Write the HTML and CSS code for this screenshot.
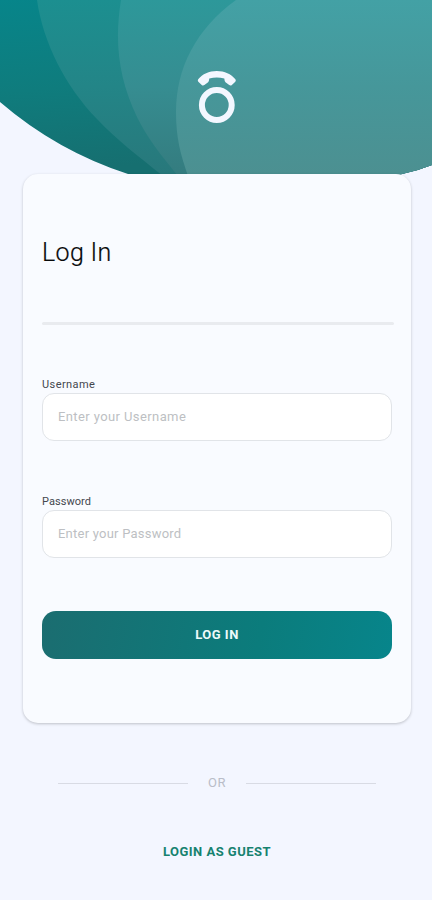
FILE: index.html
```html
<!DOCTYPE html>
<html lang="en">
<head>
<meta charset="utf-8">
<meta name="viewport" content="width=device-width">
<title>Log In</title>
<link rel="stylesheet" href="styles.css">
</head>
<body>
<header class="hero">
  <svg class="waves" viewBox="0 0 432 200" aria-hidden="true">
    <defs>
      <linearGradient id="base" x1="0" y1="0" x2=".15" y2="1"><stop offset="0" stop-color="#07858a"/><stop offset=".45" stop-color="#0f7c7d"/><stop offset=".85" stop-color="#166f70"/></linearGradient>
      <linearGradient id="w1" x1="0" y1="0" x2="0" y2="174" gradientUnits="userSpaceOnUse"><stop offset="0" stop-color="#1c8f90"/><stop offset=".5" stop-color="#238587"/><stop offset="1" stop-color="#28787b"/></linearGradient>
      <linearGradient id="w2" x1="0" y1="0" x2="0" y2="174" gradientUnits="userSpaceOnUse"><stop offset="0" stop-color="#2d989a"/><stop offset=".5" stop-color="#368d91"/><stop offset="1" stop-color="#347c7f"/></linearGradient>
      <linearGradient id="w3" x1="0" y1="0" x2="0" y2="174" gradientUnits="userSpaceOnUse"><stop offset="0" stop-color="#43a1a5"/><stop offset=".5" stop-color="#46979a"/><stop offset="1" stop-color="#4c9091"/></linearGradient>
      <clipPath id="edge"><path d="M0 0H432V165Q417 171 402 174Q265 215 128 174Q57 151 0 102Z"/></clipPath>
    </defs>
    <g clip-path="url(#edge)">
      <path fill="url(#base)" d="M0 0H432V200H0Z"/>
      <path fill="url(#w1)" d="M37 0C43 42 65 86 97 119C117 140 138 156 163 176L200 200H432V0Z"/>
      <path fill="url(#w2)" d="M121 0C114 43 119 79 137 117C148 139 160 154 178 176L200 200H432V0Z"/>
      <path fill="url(#w3)" d="M236 0C196 29 176 68 176 112C176 139 181 156 188 176L200 200H432V0Z"/>
    </g>
  </svg>
  <svg class="logo" viewBox="0 0 40 54" aria-hidden="true">
    <circle cx="19.800" cy="35" r="14.900"/>
    <path d="M1.200 9.300C5.500 4 12 1 19.800 1S34.100 4 38.400 9.300Q39.300 10.500 38.300 11.700L34.600 15.200Q33.500 16 32.200 15.100L28.500 12.200Q27.500 11.300 27.300 8.600Q19.800 6.300 12.300 8.600Q12.100 11.300 11.100 12.200L7.400 15.100Q6.100 16 5 15.200L1.300 11.700Q.3 10.500 1.200 9.300Z"/>
  </svg>
</header>
<main class="card">
  <h1>Log In</h1>
  <hr class="rule">
  <form class="form">
    <div class="field"><label for="username">Username</label><input id="username" type="text" placeholder="Enter your Username"></div>
    <div class="field password"><label for="password">Password</label><input id="password" type="password" placeholder="Enter your Password"></div>
    <button class="submit" type="button">LOG IN</button>
  </form>
</main>
<div class="divider"><span>OR</span></div>
<a class="guest" href="#">LOGIN AS GUEST</a>
</body>
</html>
```
FILE: styles.css
```css
* { box-sizing: border-box; }
body {
  margin: 0;
  height: 900px;
  overflow: hidden;
  display: flex;
  flex-direction: column;
  background: #f3f6ff;
  font-family: Roboto, "Noto Sans", sans-serif;
}
.hero {
  position: relative;
  height: 174px;
  flex: none;
  padding-top: 70px;
}
.waves {
  position: absolute;
  top: 0;
  left: 0;
  width: 432px;
  height: 200px;
}
.logo {
  position: relative;
  display: block;
  width: 40px;
  height: 54px;
  margin-left: 197px;
  fill: #f3f7ff;
}
.logo circle {
  fill: none;
  stroke: #f3f7ff;
  stroke-width: 6;
}
.card {
  position: relative;
  flex: none;
  width: 388px;
  height: 549px;
  margin-left: 23px;
  padding: 63px 19px 0;
  border-radius: 15px;
  background: #f9fbff;
  box-shadow: 0 1px 3px #00000038;
}
h1 {
  margin: 0;
  height: 32px;
  line-height: 32px;
  font-size: 25px;
  font-weight: 300;
  letter-spacing: .35px;
  color: #08090a;
  -webkit-text-stroke: .2px #08090a;
}
.rule {
  width: 352px;
  height: 3px;
  margin: 53px 0 0;
  border: 0;
  border-radius: 2px;
  background: #e9ebef;
}
.form {
  display: flex;
  flex-direction: column;
  padding-top: 53px;
}
.field {
  display: flex;
  flex-direction: column;
  height: 117px;
}
label {
  height: 15px;
  line-height: 14px;
  font-size: 11px;
  letter-spacing: .42px;
  color: #44474e;
}
input {
  width: 350px;
  height: 48px;
  padding: 0 15px 2px;
  border: 1px solid #e1e4e8;
  border-radius: 12px;
  background: #fff;
  font: 13px Roboto, "Noto Sans", sans-serif;
  letter-spacing: .4px;
}
.password label { letter-spacing: .05px; }
.password input { letter-spacing: .23px; }
input::placeholder { color: #bdbfc3; opacity: 1; }
.submit {
  width: 350px;
  height: 48px;
  margin-top: -1px;
  padding: 0 0 2px;
  border: 0;
  border-radius: 14px;
  background: linear-gradient(100deg, #1b6d70, #0b7c7c 62%, #07858b);
  color: #edfafa;
  font: 700 13px Roboto, "Noto Sans", sans-serif;
  letter-spacing: .5px;
}
.divider {
  display: flex;
  align-items: center;
  gap: 20px;
  height: 20px;
  margin: 50px 56px 0 58px;
  color: #b9bdc8;
  font-size: 13px;
  letter-spacing: .5px;
}
.divider span { margin-top: -2px; }
.divider::before,
.divider::after {
  content: "";
  flex: 1;
  height: 1px;
  background: #d8dbe4;
}
.guest {
  align-self: center;
  margin: 50px 0 0 2px;
  line-height: 18px;
  font-size: 13px;
  font-weight: 700;
  letter-spacing: .47px;
  color: #16826f;
  text-decoration: none;
}
```
